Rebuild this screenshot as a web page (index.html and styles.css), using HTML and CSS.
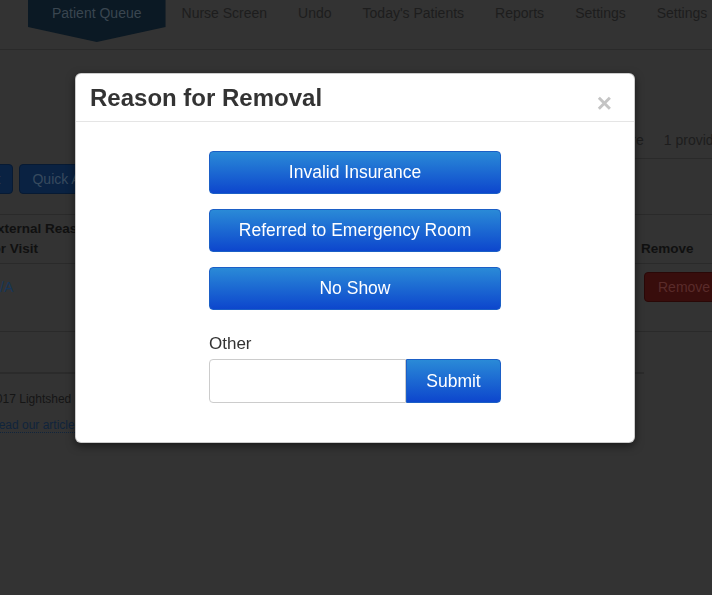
FILE: index.html
```html
<!DOCTYPE html>
<html lang="en">
<head>
<meta charset="utf-8">
<title>Patient Queue</title>
<link rel="stylesheet" href="styles.css">
</head>
<body>
<div class="page">
  <nav class="topnav">
    <a class="tab" href="#">Patient Queue</a>
    <a class="navlink" href="#">Nurse Screen</a>
    <a class="navlink" href="#">Undo</a>
    <a class="navlink" href="#">Today's Patients</a>
    <a class="navlink" href="#">Reports</a>
    <a class="navlink" href="#">Settings</a>
    <a class="navlink" href="#">Settings</a>
  </nav>

  <div class="infobar">
    <span>Show More</span>
    <span>1 provider on shift</span>
  </div>

  <div class="toolbar">
    <button class="btn-navy">Print List</button>
    <button class="btn-navy">Quick Add</button>
  </div>

  <div class="content">
    <table class="queue">
      <colgroup>
        <col class="col-reason">
        <col class="col-mid">
        <col class="col-remove">
      </colgroup>
      <thead>
        <tr>
          <th>External Reason for Visit</th>
          <th>Provider</th>
          <th class="remove-head">Remove</th>
        </tr>
      </thead>
      <tbody>
        <tr>
          <td><a class="cell-link" href="#">N/A</a></td>
          <td>Dr. Smith</td>
          <td class="remove-cell"><button class="btn-remove">Remove</button></td>
        </tr>
      </tbody>
    </table>

    <footer class="footer">
      <p class="copyright">© 2017 Lightshed Healthcare</p>
      <p><a class="articles" href="#">Read our articles</a></p>
    </footer>
  </div>
</div>

<div class="overlay">
  <div class="modal">
    <div class="modal-header">
      <h4 class="modal-title">Reason for Removal</h4>
      <button class="close" type="button">×</button>
    </div>
    <div class="modal-body">
      <div class="choices">
        <button class="btn-blue">Invalid Insurance</button>
        <button class="btn-blue">Referred to Emergency Room</button>
        <button class="btn-blue">No Show</button>
        <label class="other-label" for="other">Other</label>
        <div class="input-group">
          <input id="other" class="other-input" type="text">
          <button class="btn-blue btn-submit">Submit</button>
        </div>
      </div>
    </div>
  </div>
</div>
</body>
</html>
```

FILE: styles.css
```css
html, body {
  margin: 0;
  height: 100%;
}

body {
  background: #333333;
  font-family: "Liberation Sans", Arial, Helvetica, sans-serif;
  font-size: 14px;
  overflow: hidden;
}

.page {
  height: 595px;
  overflow: hidden;
}

/* top navigation */
.topnav {
  display: flex;
  align-items: flex-start;
  height: 49px;
  padding-left: 28px;
  border-bottom: 1px solid #2a2a2a;
  white-space: nowrap;
}

.tab {
  height: 42px;
  box-sizing: border-box;
  padding: 3px 24px 0;
  margin-right: 16px;
  background: #0b1924;
  color: #3a4650;
  line-height: 20px;
  text-decoration: none;
  clip-path: polygon(0 0, 100% 0, 100% 27px, 50% 42px, 0 27px);
}

.navlink {
  padding-top: 3px;
  margin-right: 31px;
  color: #1d1d1d;
  line-height: 20px;
  text-decoration: none;
}

/* info bar */
.infobar {
  display: flex;
  gap: 20px;
  margin: 70px 0 0 400px;
  padding: 10px 0 8px 173px;
  border-bottom: 1px solid #2a2a2a;
  color: #1d1d1d;
  line-height: 20px;
  white-space: nowrap;
}

/* toolbar */
.toolbar {
  display: flex;
  gap: 6px;
  margin: 5px 0 0 -67px;
}

.btn-navy {
  height: 30px;
  padding: 0 12px;
  border: 1px solid #071a33;
  border-radius: 4px;
  background: #0a2242;
  color: #374a5e;
  font-family: inherit;
  font-size: 14px;
  white-space: nowrap;
}

/* table */
.content {
  margin-left: -10px;
  width: 654px;
}

.queue {
  width: 768px;
  margin: 20px 0 40px -8px;
  border-collapse: collapse;
  table-layout: fixed;
}

.col-reason { width: 136px; }
.col-mid { width: 515px; }
.col-remove { width: 117px; }

.queue th {
  padding: 4px 8px 4px 6px;
  text-align: left;
  vertical-align: bottom;
  line-height: 20px;
  font-size: 13.5px;
  font-weight: bold;
  color: #101010;
  border-top: 1px solid #2a2a2a;
  border-bottom: 1px solid #2a2a2a;
}

.queue th.remove-head {
  padding-left: 8px;
}

.queue td {
  height: 51px;
  padding: 8px;
  vertical-align: top;
  line-height: 30px;
  color: #141414;
  border-bottom: 1px solid #2a2a2a;
}

.cell-link {
  color: #163659;
  text-decoration: none;
}

.queue td.remove-cell {
  padding-left: 11px;
}

.btn-remove {
  height: 30px;
  padding: 0 13px;
  border: 1px solid #2a0807;
  border-radius: 4px;
  background: #380d0c;
  color: #5a2b2a;
  font-family: inherit;
  font-size: 14px;
}

/* footer */
.footer {
  border-top: 2px solid #2b2b2b;
  padding-top: 12px;
  font-size: 12px;
  line-height: 26px;
  color: #151515;
  white-space: nowrap;
}

.footer p {
  margin: 0;
}

.footer .copyright {
  margin-left: -13px;
}

.articles {
  color: #10243c;
  text-decoration: none;
  border-bottom: 1px dotted #10243c;
}

/* modal */
.overlay {
  position: fixed;
  inset: 0;
  display: flex;
  justify-content: center;
  align-items: flex-start;
  padding: 73px 2px 0 0;
}

.modal {
  width: 560px;
  box-sizing: border-box;
  background: #ffffff;
  border: 1px solid rgba(0, 0, 0, 0.2);
  border-radius: 6px;
  box-shadow: 0 3px 9px rgba(0, 0, 0, 0.5);
}

.modal-header {
  display: flex;
  justify-content: space-between;
  align-items: flex-start;
  padding: 11px 22px 10px 14px;
  border-bottom: 1px solid #e5e5e5;
}

.modal-title {
  margin: 0;
  font-size: 24px;
  line-height: 26px;
  font-weight: bold;
  color: #333333;
}

.close {
  height: 26px;
  margin: 5px 0 -5px;
  padding: 0;
  border: 0;
  background: none;
  font-family: inherit;
  font-size: 26px;
  font-weight: bold;
  line-height: 26px;
  color: #c4c4c4;
}

.modal-body {
  display: flex;
  justify-content: center;
  padding: 29px 0 39px;
}

.choices {
  width: 292px;
  display: flex;
  flex-direction: column;
  gap: 15px;
}

.btn-blue {
  height: 43px;
  box-sizing: border-box;
  padding: 0 12px;
  border: 1px solid #1b5fc6;
  border-radius: 4px;
  background: linear-gradient(#2a8ad7, #0d46cd);
  color: #ffffff;
  font-family: inherit;
  font-size: 17.5px;
}

.other-label {
  margin: 7px 0 -12px;
  font-size: 17px;
  line-height: 24px;
  color: #333333;
}

.input-group {
  display: flex;
  height: 44px;
}

.other-input {
  flex: 1;
  min-width: 0;
  box-sizing: border-box;
  height: 44px;
  margin: 0;
  border: 1px solid #cccccc;
  border-radius: 4px 0 0 4px;
  font-family: inherit;
  font-size: 17px;
  padding: 0 12px;
}

.btn-submit {
  width: 95px;
  height: 44px;
  border-radius: 0 4px 4px 0;
}
```
